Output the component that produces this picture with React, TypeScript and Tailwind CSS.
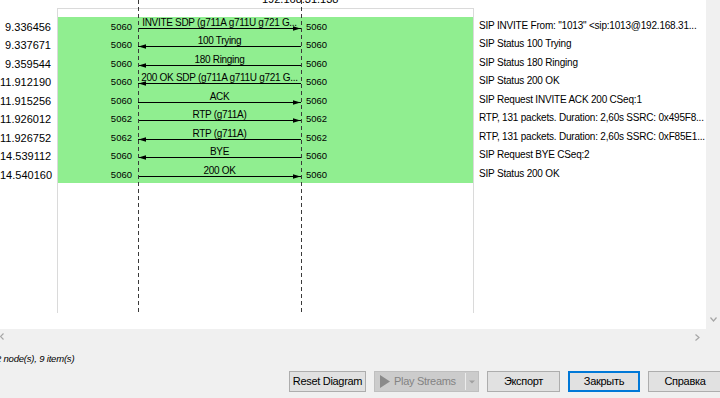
import React from "react";

type Row = {
  t: string;
  lp: string;
  rp: string;
  label: string;
  dir: "r" | "l";
  c: string;
};

const rows: Row[] = [
  { t: "9.336456", lp: "5060", rp: "5060", label: "INVITE SDP (g711A g711U g721 G...", dir: "r", c: 'SIP INVITE From: "1013" <sip:1013@192.168.31...' },
  { t: "9.337671", lp: "5060", rp: "5060", label: "100 Trying", dir: "l", c: "SIP Status 100 Trying" },
  { t: "9.359544", lp: "5060", rp: "5060", label: "180 Ringing", dir: "l", c: "SIP Status 180 Ringing" },
  { t: "11.912190", lp: "5060", rp: "5060", label: "200 OK SDP (g711A g711U g721 G...", dir: "l", c: "SIP Status 200 OK" },
  { t: "11.915256", lp: "5060", rp: "5060", label: "ACK", dir: "r", c: "SIP Request INVITE ACK 200 CSeq:1" },
  { t: "11.926012", lp: "5062", rp: "5062", label: "RTP (g711A)", dir: "r", c: "RTP, 131 packets. Duration: 2,60s SSRC: 0x495F8..." },
  { t: "11.926752", lp: "5062", rp: "5062", label: "RTP (g711A)", dir: "l", c: "RTP, 131 packets. Duration: 2,60s SSRC: 0xF85E1..." },
  { t: "14.539112", lp: "5060", rp: "5060", label: "BYE", dir: "l", c: "SIP Request BYE CSeq:2" },
  { t: "14.540160", lp: "5060", rp: "5060", label: "200 OK", dir: "r", c: "SIP Status 200 OK" },
];

function Arrow({ dir }: { dir: "r" | "l" }) {
  return (
    <svg width="163" height="18" className="absolute left-0 top-0" viewBox="0 0 163 18">
      <line x1="0" y1="11.5" x2="163" y2="11.5" stroke="#000" strokeWidth="1" />
      {dir === "r" ? (
        <polygon points="155,9.3 162.5,11.5 155,13.7" fill="#000" />
      ) : (
        <polygon points="8,9.3 0.5,11.5 8,13.7" fill="#000" />
      )}
    </svg>
  );
}

export default function App() {
  return (
    <div className="w-[720px] h-[398px] overflow-hidden bg-[#f0f0f0] font-['Liberation_Sans',Arial,sans-serif] text-black">
      {/* top scrolled area */}
      <div className="flex h-[329px]">
        <div className="relative w-[706px] bg-white overflow-hidden">
          <div className="absolute left-[262px] top-[-6px] text-[11px] leading-[11px] whitespace-nowrap">
            192.168.31.138
          </div>
          <div className="flex h-full">
            {/* time column */}
            <div className="w-[57px] pt-[17px] pr-[6px] text-right">
              {rows.map((r, i) => (
                <div key={i} className="h-[18.44px] text-[11px] leading-[21px] whitespace-nowrap">
                  {r.t}
                </div>
              ))}
            </div>
            {/* diagram box */}
            <div className="w-[417px] h-[305px] mt-[8px] border-t border-l border-r border-[#dadada]">
              <div className="h-[8px]" />
              <div className="bg-[#90ee90]">
                {rows.map((r, i) => (
                  <div key={i} className="flex h-[18.44px]">
                    <div className="w-[80px] pr-[6px] text-right text-[9.5px] leading-[20px]">{r.lp}</div>
                    <div className="relative w-[163px]">
                      <Arrow dir={r.dir} />
                      <div className="absolute inset-x-0 top-0 flex justify-center">
                        <span className="whitespace-nowrap text-[10px] leading-[11px] tracking-[-0.3px]">
                          {r.label}
                        </span>
                      </div>
                    </div>
                    <div className="pl-[5px] text-[9.5px] leading-[20px]">{r.rp}</div>
                  </div>
                ))}
              </div>
            </div>
            {/* comment column */}
            <div className="pt-[17px] pl-[5px]">
              {rows.map((r, i) => (
                <div key={i} className="h-[18.44px] text-[10px] leading-[18px] tracking-[-0.2px] whitespace-nowrap">
                  {r.c}
                </div>
              ))}
            </div>
          </div>
          {/* lifelines */}
          <svg className="absolute left-0 top-0 pointer-events-none" width="706" height="313">
            <line x1="138.5" y1="0" x2="138.5" y2="313" stroke="#3a3a3a" strokeWidth="1" strokeDasharray="4 3" />
            <line x1="301.5" y1="0" x2="301.5" y2="313" stroke="#3a3a3a" strokeWidth="1" strokeDasharray="4 3" />
          </svg>
        </div>
        {/* vertical scrollbar */}
        <div className="w-[14px] flex flex-col justify-end items-center pb-[7px]">
          <svg width="7" height="5" viewBox="0 0 7 5">
            <polyline points="0.5,0.5 3.5,4 6.5,0.5" fill="none" stroke="#a6a6a6" strokeWidth="1.2" />
          </svg>
        </div>
      </div>
      {/* horizontal scrollbar */}
      <div className="h-[14px] flex items-center justify-between pr-[20px]">
        <svg width="4" height="7" viewBox="0 0 4 7">
          <polyline points="3.5,0.5 0.5,3.5 3.5,6.5" fill="none" stroke="#a6a6a6" strokeWidth="1.2" />
        </svg>
        <svg width="5" height="7" viewBox="0 0 5 7" className="mt-[2px]">
          <polyline points="0.5,0.5 4,3.5 0.5,6.5" fill="none" stroke="#a6a6a6" strokeWidth="1.2" />
        </svg>
      </div>
      {/* status */}
      <div className="mt-[10px] h-[12px] text-[9.5px] leading-[12px] italic tracking-[-0.2px] whitespace-nowrap ml-[-4px]">
        2 node(s), 9 item(s)
      </div>
      {/* buttons */}
      <div className="mt-[6px] flex justify-end gap-2 mr-[-2px] text-[11px] leading-[19px] tracking-[-0.3px]">
        <button className="w-[77px] h-[21px] border border-[#adadad] bg-[#e1e1e1] text-center whitespace-nowrap">
          Reset Diagram
        </button>
        <div className="w-[105px] h-[21px] border border-[#bfbfbf] bg-[#cccccc] flex items-center text-[#838383]">
          <svg width="10" height="13" viewBox="0 0 10 13" className="ml-[5px]">
            <polygon points="0,0 10,6.5 0,13" fill="#8a8a8a" />
          </svg>
          <span className="ml-[4px] whitespace-nowrap">Play Streams</span>
          <div className="ml-auto h-full flex items-center">
            <div className="w-px h-[17px] bg-[#ececec]" />
            <svg width="12" height="6" viewBox="0 0 12 6">
              <polygon points="3,1.5 9,1.5 6,4.5" fill="#a0a0a0" />
            </svg>
          </div>
        </div>
        <button className="w-[73px] h-[21px] border border-[#adadad] bg-[#e1e1e1] text-center">
          Экспорт
        </button>
        <button className="w-[72px] h-[21px] border-2 border-[#0078d7] bg-[#e1e1e1] text-center leading-[17px]">
          Закрыть
        </button>
        <button className="w-[74px] h-[21px] border border-[#adadad] bg-[#e1e1e1] text-center">
          Справка
        </button>
      </div>
    </div>
  );
}
